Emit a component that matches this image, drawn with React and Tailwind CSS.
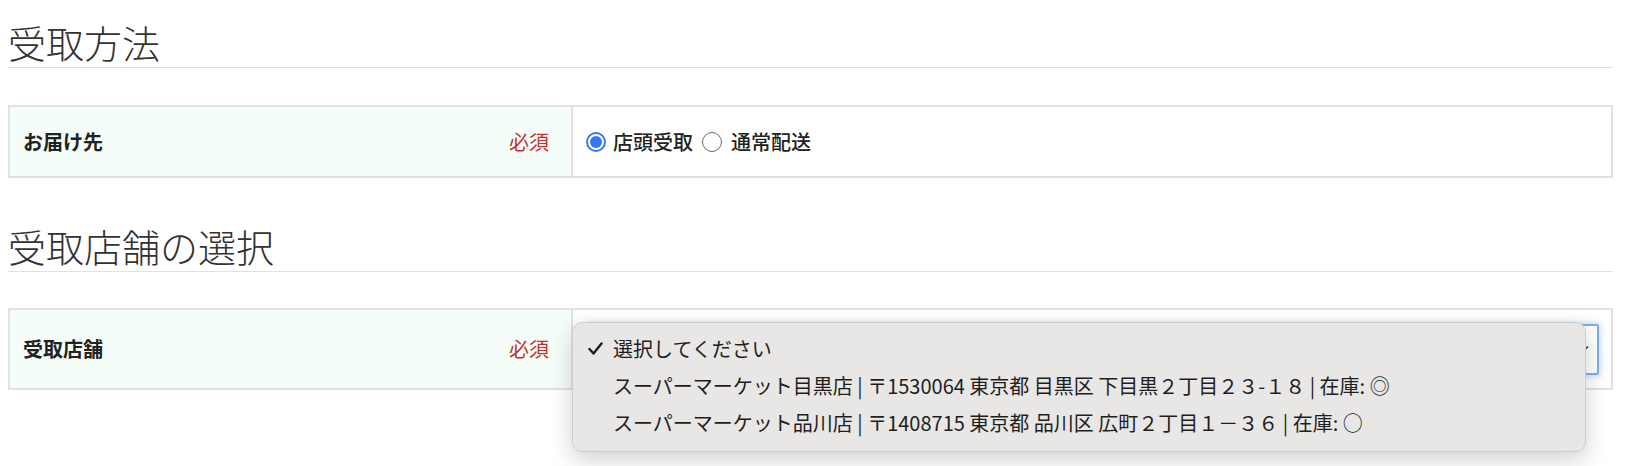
export default function App() {
  return (
    <div className="w-[1636px] h-[466px] bg-white overflow-hidden font-['Noto_Sans_CJK_JP',sans-serif] text-[#222]">
      <div className="ml-2 w-[1605px]">
        {/* 受取方法 */}
        <h2 className="mt-[19px] pb-[2px] text-[38px] leading-[46px] font-light text-[#333] border-b border-[#e2e2e2]">
          受取方法
        </h2>
        <div className="mt-[37px] flex h-[73px] border-2 border-[#e2e2e2]">
          <div className="w-[563px] flex items-center justify-between pl-[13px] pr-[22px] bg-[#f5fdf8] border-r-2 border-[#e2e2e2]">
            <span className="text-[20px] font-bold">お届け先</span>
            <span className="text-[20px] text-[#c9302c]">必須</span>
          </div>
          <div className="flex-1 flex items-center pl-[13px] text-[20px] font-medium">
            <span className="w-[20px] h-[20px] rounded-full border-2 border-[#3478f6] flex items-center justify-center">
              <span className="w-[12px] h-[12px] rounded-full bg-[#3478f6]"></span>
            </span>
            <span className="ml-[7px]">店頭受取</span>
            <span className="ml-[9px] w-[20px] h-[20px] rounded-full border border-[#6b6b6b] bg-white"></span>
            <span className="ml-[9px]">通常配送</span>
          </div>
        </div>

        {/* 受取店舗の選択 */}
        <h2 className="mt-[45px] pb-[2px] text-[38px] leading-[46px] font-light text-[#333] border-b border-[#e2e2e2]">
          受取店舗の選択
        </h2>
        <div className="relative mt-[36px]">
          <div className="flex h-[82px] border-2 border-[#e2e2e2]">
            <div className="w-[563px] flex items-center justify-between pl-[13px] pr-[22px] bg-[#f5fdf8] border-r-2 border-[#e2e2e2]">
              <span className="text-[20px] font-bold">受取店舗</span>
              <span className="text-[20px] text-[#c9302c]">必須</span>
            </div>
            <div className="flex-1 flex items-center pl-[14px] pr-[12px]">
              <div className="flex-1 h-[51px] flex items-center justify-end pr-[8px] bg-white border-2 border-[#7fb0ea] rounded-[2px] shadow-[0_0_5px_2px_rgba(120,170,230,0.35)]">
                <svg width="12" height="8" viewBox="0 0 12 8" fill="none" stroke="#333" strokeWidth="1.5">
                  <path d="M1 1.5l5 5 5-5" />
                </svg>
              </div>
            </div>
          </div>

          {/* open dropdown menu */}
          <div className="absolute left-[564px] top-[14px] w-[1014px] h-[130px] pt-[7px] bg-[#e9e7e5] rounded-[10px] border border-[#cfcdcb] shadow-[0_8px_24px_rgba(0,0,0,0.18)] text-[20px] leading-[37px] text-[#1e1e1e]">
            <div className="flex items-center">
              <span className="w-[40px] flex justify-end pr-[10px]">
                <svg width="15" height="13" viewBox="0 0 15 13" fill="none" stroke="#1e1e1e" strokeWidth="2.4" strokeLinecap="round" strokeLinejoin="round">
                  <path d="M1.5 7l4 4.5L13.5 1.5" />
                </svg>
              </span>
              <span>選択してください</span>
            </div>
            <div className="pl-[40px] whitespace-nowrap">
              スーパーマーケット目黒店 | 〒1530064 東京都 目黒区 下目黒２丁目２３-１８ | 在庫: ◎
            </div>
            <div className="pl-[40px] whitespace-nowrap">
              スーパーマーケット品川店 | 〒1408715 東京都 品川区 広町２丁目１－３６ | 在庫: ○
            </div>
          </div>
        </div>
      </div>
    </div>
  );
}
